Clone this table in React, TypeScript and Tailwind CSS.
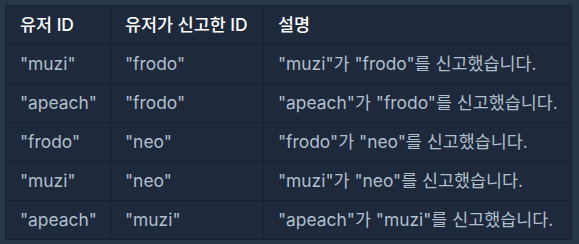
const ROWS = [
  ['"muzi"', '"frodo"', '"muzi"가 "frodo"를 신고했습니다.'],
  ['"apeach"', '"frodo"', '"apeach"가 "frodo"를 신고했습니다.'],
  ['"frodo"', '"neo"', '"frodo"가 "neo"를 신고했습니다.'],
  ['"muzi"', '"neo"', '"muzi"가 "neo"를 신고했습니다.'],
  ['"apeach"', '"muzi"', '"apeach"가 "muzi"를 신고했습니다.'],
]

export default function App() {
  return (
    <div
      className="w-[579px] h-[244px] bg-[#263747] p-[5px] pr-[7px]"
      style={{ fontFamily: 'Inter, "Noto Sans CJK KR", sans-serif' }}
    >
      <table className="w-[567px] table-fixed border-collapse bg-[#1e293b] text-[17.4px] leading-6">
        <colgroup>
          <col className="w-[105px]" />
          <col className="w-[153px]" />
          <col />
        </colgroup>
        <thead>
          <tr>
            <th className={cellCls + ' text-white font-medium'}>유저 ID</th>
            <th className={cellCls + ' text-white font-medium'}>유저가 신고한 ID</th>
            <th className={cellCls + ' text-white font-medium'}>설명</th>
          </tr>
        </thead>
        <tbody>
          {ROWS.map((r, i) => (
            <tr key={i}>
              {r.map((c, j) => (
                <td key={j} className={cellCls + ' text-[#b0bfcc]'}>{c}</td>
              ))}
            </tr>
          ))}
        </tbody>
      </table>
    </div>
  )
}

const cellCls = 'border border-[#172130] px-[14px] py-[7px] text-left align-middle whitespace-nowrap'
